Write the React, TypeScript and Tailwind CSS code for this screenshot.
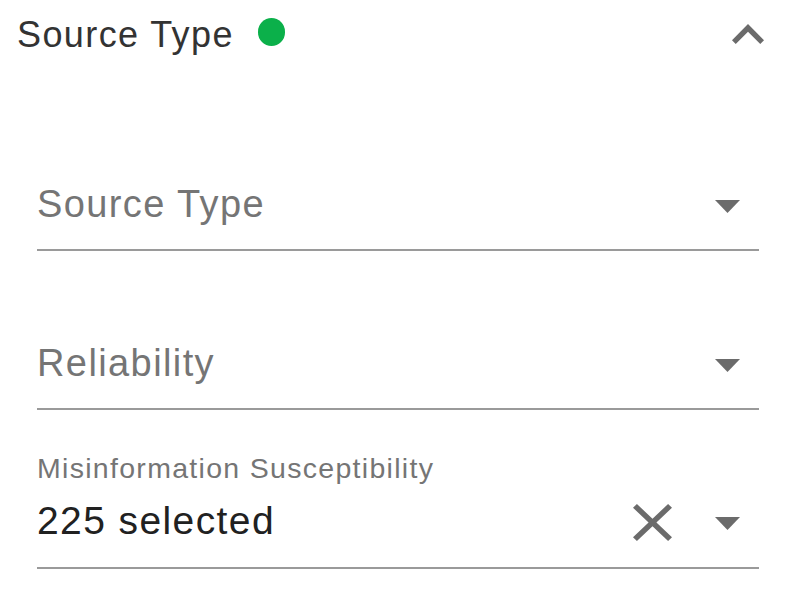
function DropArrow() {
    return (
        <svg width="25" height="13" viewBox="0 0 25 13" className="shrink-0 mt-[5px]">
            <path d="M0 0 L25 0 L12.5 13 Z" fill="#6b6b6b" />
        </svg>
    )
}

function CloseIcon() {
    return (
        <svg width="39" height="37" viewBox="5 5 14 14" preserveAspectRatio="none" className="shrink-0 mt-[3px]">
            <path d="M19 6.41L17.59 5 12 10.59 6.41 5 5 6.41 10.59 12 5 17.59 6.41 19 12 13.41 17.59 19 19 17.59 13.41 12z" fill="#6b6b6b" />
        </svg>
    )
}

function SelectField({ label, value }: { label: string; value?: string }) {
    return (
        <div className="h-[159px] flex flex-col justify-end">
            {value && (
                <span className="text-[28.5px] leading-[28.5px] tracking-[1.3px] text-[#757575] mb-[19px]">{label}</span>
            )}
            <div className="flex flex-row items-center pb-[26px] border-b-2 border-[#9a9a9a] pr-[19px]">
                <span className={`flex-1 leading-[38px] tracking-[1.4px] ${value ? 'text-[39px] text-[#212121]' : 'text-[38px] text-[#757575]'}`}>
                    {value ?? label}
                </span>
                {value && <div className="mr-[43px]"><CloseIcon /></div>}
                <DropArrow />
            </div>
        </div>
    )
}

export default function App() {
    return (
        <div className="w-[810px] h-[592px] bg-white overflow-hidden font-['Liberation_Sans',Arial,sans-serif]">

            <div className="h-[70px] flex flex-row items-center pl-[17px] pr-[46px]">
                <span className="text-[36px] leading-[36px] tracking-[1.4px] text-[#333333]">Source Type</span>
                <span className="w-[27px] h-[28px] rounded-full bg-[#0bb04a] ml-[24px] -mt-[6px]" />
                <svg width="32" height="20" viewBox="6 8 12 7.41" preserveAspectRatio="none" className="ml-auto -mt-[2px]">
                    <path d="M12 8l-6 6 1.41 1.41L12 10.83l4.59 4.58L18 14z" fill="#6b6b6b" />
                </svg>
            </div>

            <div className="flex flex-col pl-[37px] pr-[51px] mt-[22px]">
                <SelectField label="Source Type" />
                <SelectField label="Reliability" />
                <SelectField label="Misinformation Susceptibility" value="225 selected" />
            </div>

        </div>
    )
}
